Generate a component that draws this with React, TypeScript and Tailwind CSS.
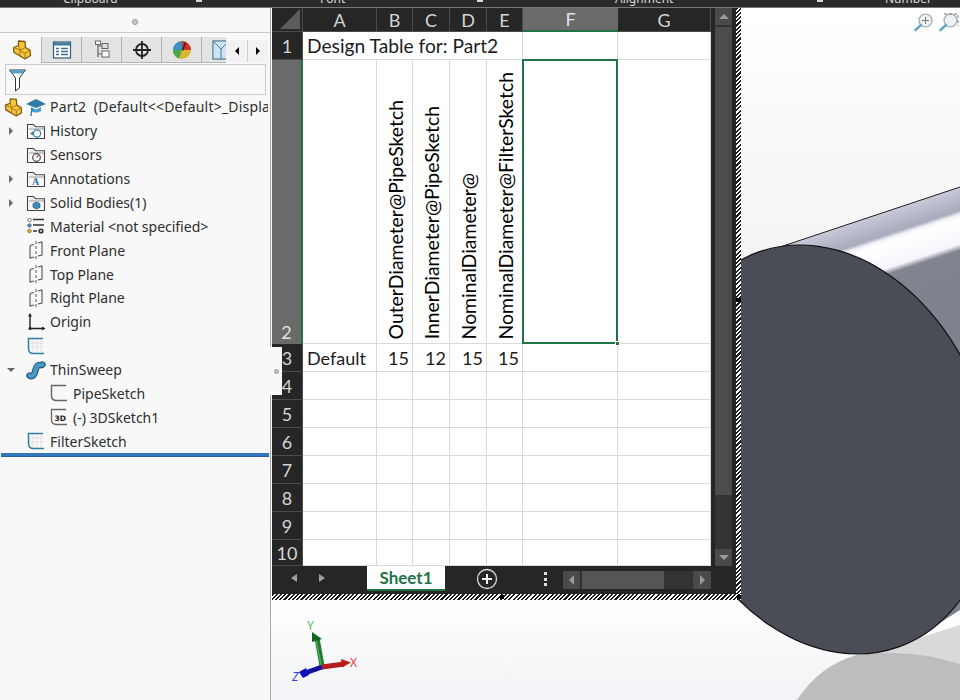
import React from 'react'

const ui = { fontFamily: '"Noto Sans", "Open Sans", sans-serif' }
const xl = { fontFamily: 'Lato, "Noto Sans", sans-serif' }

const hatch = 'bg-[repeating-linear-gradient(135deg,#1c1c1c_0px,#1c1c1c_1.5px,#ffffff_1.5px,#ffffff_3px)]'

function PartIcon({ size = 20 }: { size?: number }) {
  return (
    <svg width={size} height={size} viewBox="0 0 20 20" className="shrink-0">
      <path d="M6.5 1L13 1.5 13.5 7.5 18 10 18.5 15.5 13 19 8 16 2 12.5 1.5 7.5 6.5 5.5Z" fill="#f4c63f" stroke="#7d5a0c" strokeWidth="1.3" strokeLinejoin="round" />
      <path d="M6.5 5.5L8 10 13.5 7.5M1.5 7.5L8 10 8 16M8 10.5L13 13.5 18 10M13 13.5V19" fill="none" stroke="#a67c17" strokeWidth="1" />
    </svg>
  )
}

function Folder({ children }: { children?: React.ReactNode }) {
  return (
    <svg width="20" height="20" viewBox="0 0 20 20">
      <path d="M1.5 17.5V3.5h6l2 2.2h9v11.8z" fill="#f7f7f7" stroke="#444" strokeWidth="1.1" />
      <path d="M3 8h15" stroke="#9a9a9a" strokeWidth="1" />
      {children}
    </svg>
  )
}

function PlaneIcon() {
  return (
    <svg width="20" height="20" viewBox="0 0 20 20">
      <path d="M4 5.5l4-1M12 3l4-1v13l-4 1M8 17l-4 1V5.5" fill="none" stroke="#555" strokeWidth="1.1" />
      <path d="M10 1v18" stroke="#555" strokeWidth="1" strokeDasharray="3 2" />
    </svg>
  )
}

function SketchIcon({ grid = true, color = '#2f7f9f' }: { grid?: boolean; color?: string }) {
  return (
    <svg width="20" height="20" viewBox="0 0 20 20">
      {grid && <path d="M7 3v14M11 3v14M15 3v14M3 7h15M3 11h15" stroke="#dcdcdc" strokeWidth="0.8" />}
      <path d="M17 2.5H2.5V12.5q0 5 5 5H18" fill="none" stroke={color} strokeWidth="1.5" />
    </svg>
  )
}

type TreeRow = { label: string; indent: 0 | 1; arrow?: 'right' | 'down'; icon: React.ReactNode }

const rows: TreeRow[] = [
  { label: 'History', indent: 0, arrow: 'right', icon: <Folder><circle cx="11" cy="12.5" r="3.6" fill="#fff" stroke="#3d7da0" strokeWidth="1.2" /><path d="M4 12.5l3-2v4z" fill="#3d7da0" /></Folder> },
  { label: 'Sensors', indent: 0, icon: <Folder><circle cx="10.5" cy="12.5" r="3.8" fill="#fff" stroke="#444" strokeWidth="1.2" /><path d="M10.5 12.5l2-2.5" stroke="#c0392b" strokeWidth="1.2" /></Folder> },
  { label: 'Annotations', indent: 0, arrow: 'right', icon: <Folder><text x="6" y="16" fontSize="10" fontWeight="700" fontFamily="Liberation Serif" fill="#2f6f9f">A</text></Folder> },
  { label: 'Solid Bodies(1)', indent: 0, arrow: 'right', icon: <Folder><path d="M10.5 9l3.5 1.7v3.6l-3.5 1.7-3.5-1.7v-3.6z" fill="#3d8ab5" stroke="#1f5a7c" strokeWidth="0.7" /></Folder> },
  {
    label: 'Material <not specified>', indent: 0, icon: (
      <svg width="20" height="20" viewBox="0 0 20 20">
        <circle cx="3.5" cy="4" r="1.7" fill="#fff" stroke="#777" />
        <circle cx="3.5" cy="9.5" r="1.7" fill="#5a9bc4" stroke="#3b6f90" />
        <circle cx="3.5" cy="15" r="1.7" fill="#e8b93a" stroke="#94741c" />
        <path d="M7 3.5h11M7 9h11M7 15h4" stroke="#333" strokeWidth="1.6" />
        <circle cx="15" cy="15" r="2.6" fill="#333" /><circle cx="15" cy="15" r="0.9" fill="#fff" />
      </svg>
    ),
  },
  { label: 'Front Plane', indent: 0, icon: <PlaneIcon /> },
  { label: 'Top Plane', indent: 0, icon: <PlaneIcon /> },
  { label: 'Right Plane', indent: 0, icon: <PlaneIcon /> },
  {
    label: 'Origin', indent: 0, icon: (
      <svg width="20" height="20" viewBox="0 0 20 20">
        <path d="M4 3v13.5h14" fill="none" stroke="#222" strokeWidth="1.4" />
        <path d="M4 1l-2 3.5h4zM19.5 16.5L16 14.5v4z" fill="#222" />
        <circle cx="4" cy="16.5" r="1.5" fill="#222" />
      </svg>
    ),
  },
  { label: '', indent: 0, icon: <SketchIcon /> },
  {
    label: 'ThinSweep', indent: 0, arrow: 'down', icon: (
      <svg width="20" height="20" viewBox="0 0 20 20">
        <path d="M3.5 15.5q3 2 5-2l1.5-5q1-3 3-3.5 2 .5 3.5-.5" fill="none" stroke="#1f4f6e" strokeWidth="6.4" strokeLinecap="round" />
        <path d="M3.5 15.5q3 2 5-2l1.5-5q1-3 3-3.5 2 .5 3.5-.5" fill="none" stroke="#4a9ac7" strokeWidth="4.4" strokeLinecap="round" />
      </svg>
    ),
  },
  { label: 'PipeSketch', indent: 1, icon: <SketchIcon grid={false} color="#666" /> },
  {
    label: '(-) 3DSketch1', indent: 1, icon: (
      <svg width="20" height="20" viewBox="0 0 20 20">
        <path d="M17 2.5H2.5V12.5q0 5 5 5H18" fill="none" stroke="#666" strokeWidth="1.3" />
        <text x="5.5" y="14" fontSize="7.5" fontWeight="700" fontFamily="DejaVu Sans" fill="#222">3D</text>
      </svg>
    ),
  },
  { label: 'FilterSketch', indent: 0, icon: <SketchIcon /> },
]

function Tabs() {
  const cls = 'w-10 h-[26px] flex items-center justify-center bg-[#e3e3e3] border-r border-b border-[#b4b4b4]'
  return (
    <div className="mt-1 h-[26px] flex pl-[2px] relative">
      <div className="w-[40px] h-[26px] flex items-center justify-center bg-[#f8f8f8] border-r border-[#b4b4b4]">
        <PartIcon />
      </div>
      <div className={cls}>
        <svg width="20" height="20" viewBox="0 0 20 20">
          <rect x="1.5" y="2" width="17" height="16" fill="#fff" stroke="#2f5d78" strokeWidth="1.2" />
          <rect x="2" y="2.5" width="16" height="3" fill="#3f7f9c" />
          <path d="M4 8.5h3M9 8.5h7M4 11.5h3M9 11.5h7M4 14.5h3M9 14.5h7" stroke="#40708c" strokeWidth="1.4" />
        </svg>
      </div>
      <div className={cls}>
        <svg width="20" height="20" viewBox="0 0 20 20">
          <path d="M6 2v15M6 6h4M6 14h4" fill="none" stroke="#666" strokeWidth="1.2" />
          <rect x="3.5" y="1" width="5" height="3.5" fill="#fff" stroke="#666" />
          <rect x="10" y="3.5" width="6" height="5" fill="#ddd" stroke="#666" />
          <rect x="10" y="11" width="7" height="6" fill="#fff" stroke="#666" />
        </svg>
      </div>
      <div className={cls}>
        <svg width="20" height="20" viewBox="0 0 20 20">
          <circle cx="10" cy="10" r="6" fill="none" stroke="#222" strokeWidth="1.8" />
          <path d="M10 1v18M1 10h18" stroke="#222" strokeWidth="1.8" />
        </svg>
      </div>
      <div className={cls}>
        <svg width="20" height="20" viewBox="0 0 20 20">
          <circle cx="10" cy="10" r="9" fill="#d9b531" />
          <path d="M10 10L1 10A9 9 0 0 1 10 1z" fill="#3e8fc7" />
          <path d="M10 10V1A9 9 0 0 1 19 10z" fill="#c8352e" />
          <path d="M10 10H1A9 9 0 0 0 7 18.5z" fill="#4ea646" />
          <path d="M10 10l3-8 1 1-3 8z" fill="#222" />
        </svg>
      </div>
      <div className="w-[24px] h-[26px] flex items-center pl-[10px] bg-[#e3e3e3] border-b border-[#b4b4b4] overflow-hidden">
        <svg width="18" height="20" viewBox="0 0 18 20" className="shrink-0">
          <rect width="18" height="20" fill="#bdbdbd" />
          <path d="M1 1h16v18H1z" fill="#cfe2ee" stroke="#3f7f9c" />
          <path d="M1 1l8 8 8-8M9 9v10" fill="none" stroke="#3f7f9c" />
        </svg>
      </div>
      <div className="w-[42px] h-[22px] mt-[3px] flex items-center bg-[#f2f2f2]">
        <div className="w-[22px] h-[22px] flex items-center justify-center border-r border-[#cfcfcf]">
          <div className="w-0 h-0 border-y-[4px] border-y-transparent border-r-[4px] border-r-black" />
        </div>
        <div className="w-[20px] h-[22px] flex items-center justify-center">
          <div className="w-0 h-0 border-y-[4px] border-y-transparent border-l-[4px] border-l-black" />
        </div>
      </div>
    </div>
  )
}

function Sidebar() {
  return (
    <aside style={ui} className="w-[271px] shrink-0 h-full bg-[#f8f8f8] border-r border-[#a8a8a8] flex flex-col text-[14px] text-[#2e2e2e]">
      <div className="h-[25px] flex items-center justify-center border-b border-[#c8c8c8] shrink-0">
        <div className="w-[6px] h-[6px] rounded-full bg-[#c9c9c9] border border-[#9a9a9a] mt-[3px]" />
      </div>
      <Tabs />
      <div className="mx-[5px] mt-px h-[31px] w-[261px] bg-[#f8f8f8] border border-[#cccccc] flex items-center pl-[2px] shrink-0">
        <svg width="20" height="26" viewBox="0 0 20 26">
          <path d="M1.5 3h16l-6 8v10l-4 3V11z" fill="#fff" stroke="#333" strokeWidth="1" />
          <path d="M2 3h15l-2.5 3.5h-10z" fill="#5aa0cc" />
        </svg>
      </div>
      <div className="flex flex-col">
        <div className="h-[24px] flex items-center pl-[4px] whitespace-nowrap overflow-hidden w-[268px]">
          <PartIcon size={19} />
          <svg width="22" height="20" viewBox="0 0 22 20" className="ml-[2px] shrink-0">
            <path d="M1 7L11 2l10 5-10 4z" fill="#2f7ca6" />
            <path d="M6 10v4q5 3 10 0v-4l-5 2.5z" fill="#46a0cc" />
            <path d="M6 19l1-8" stroke="#2f7ca6" strokeWidth="1.4" />
          </svg>
          <span className="ml-[3px] -mt-px tracking-[0.2px]">Part2&nbsp; (Default&lt;&lt;Default&gt;_Display State 1&gt;)</span>
        </div>
        {rows.map((r, i) => (
          <div key={i} className={r.indent ? 'h-[23.86px] flex items-center pl-[49px]' : 'h-[23.86px] flex items-center pl-[7px]'}>
            {!r.indent && (
              <span className="w-[19px] flex items-center">
                {r.arrow === 'right' && <span className="ml-[2px] w-0 h-0 border-y-[4px] border-y-transparent border-l-[4px] border-l-[#666]" />}
                {r.arrow === 'down' && <span className="w-0 h-0 border-x-[4px] border-x-transparent border-t-[4px] border-t-[#666]" />}
              </span>
            )}
            <span className="w-[20px] h-[20px] shrink-0">{r.icon}</span>
            <span className="ml-[4px]">{r.label}</span>
          </div>
        ))}
      </div>
      <div className="ml-px w-[268px] h-[4px] bg-[#2f78bd] border-b border-[#2b5f94]" />
    </aside>
  )
}

const cols = ['A', 'B', 'C', 'D', 'E', 'F', 'G']
const headers = ['OuterDiameter@PipeSketch', 'InnerDiameter@PipeSketch', 'NominalDiameter@', 'NominalDiameter@FilterSketch']
const values = ['15', '12', '15', '15']
const cell = 'border-r border-b border-[#dadada] bg-white'
const rowHead = 'bg-[#262626] border-r border-b border-[#4a4a4a] flex items-center justify-center text-[#d4d4d4] text-[18px]'

function Sheet() {
  return (
    <div
      style={xl}
      className="grid grid-cols-[31px_74px_36px_37px_37px_36px_95px_93px] grid-rows-[24px_28px_284px_28px_28px_28px_28px_28px_28px_28px_26px] text-[18px] text-[#1c1c1c] leading-none"
    >
      <div className="bg-[#262626] border-r border-b border-[#4a4a4a] flex items-end justify-end p-[2px]">
        <div className="w-0 h-0 border-l-[20px] border-l-transparent border-b-[20px] border-b-[#5c5c5c]" />
      </div>
      {cols.map(c => (
        <div
          key={c}
          className={c === 'F'
            ? 'bg-[#6a6a6a] border-b-2 border-[#217346] flex items-center justify-center text-[#e2e2e2]'
            : 'bg-[#262626] border-r border-b border-[#4a4a4a] flex items-center justify-center text-[#d4d4d4]'}
        >
          {c}
        </div>
      ))}

      <div className={rowHead}>1</div>
      <div className="col-span-5 bg-white border-b border-[#dadada] border-r flex items-center pl-[4px] whitespace-nowrap text-[19.2px]">Design Table for: Part2</div>
      <div className={cell} />
      <div className={cell} />

      <div className="bg-[#6a6a6a] border-r-2 border-[#217346] flex items-end justify-center pb-[3px] text-[#e2e2e2]">2</div>
      <div className={cell} />
      {headers.map(h => (
        <div key={h} className={cell + ' flex items-end justify-center pb-[4px] pl-[2px] text-[19.4px] text-black'}>
          <span className="[writing-mode:vertical-rl] rotate-180 whitespace-nowrap">{h}</span>
        </div>
      ))}
      <div className="relative bg-white">
        <div className="absolute -left-px -top-px right-0 bottom-0 border-2 border-[#217346]" />
        <div className="absolute right-[-2px] bottom-[-2px] w-[5px] h-[5px] bg-[#217346] border border-white" />
      </div>
      <div className={cell} />

      <div className={rowHead}>3</div>
      <div className={cell + ' flex items-center pl-[4px]'}>Default</div>
      {values.map((v, i) => (
        <div key={i} className={cell + ' flex items-center justify-end pr-[3px]'}>{v}</div>
      ))}
      <div className={cell} />
      <div className={cell} />

      {[4, 5, 6, 7, 8, 9, 10].map(n => (
        <React.Fragment key={n}>
          <div className={rowHead}>{n}</div>
          {cols.map(c => <div key={c} className={cell} />)}
        </React.Fragment>
      ))}
    </div>
  )
}

function SheetTabs() {
  return (
    <div style={xl} className="h-[26px] bg-[#262626] flex items-start shrink-0">
      <div className="w-[95px] h-[24px] flex items-center gap-[22px] pl-[19px]">
        <div className="w-0 h-0 border-y-[4px] border-y-transparent border-r-[6px] border-r-[#a0a0a0]" />
        <div className="w-0 h-0 border-y-[4px] border-y-transparent border-l-[6px] border-l-[#a0a0a0]" />
      </div>
      <div className="w-[78px] h-[25px] bg-white border-b-2 border-[#217346] flex items-center justify-center text-[17px] font-bold text-[#217346]">Sheet1</div>
      <div className="w-[86px] h-[26px] flex items-center pl-[31px]">
        <svg width="22" height="22" viewBox="0 0 22 22">
          <circle cx="11" cy="11" r="9.5" fill="none" stroke="#d8d8d8" strokeWidth="1.3" />
          <path d="M11 6v10M6 11h10" stroke="#f0f0f0" strokeWidth="2" />
        </svg>
      </div>
      <div className="w-[32px] h-[26px] flex flex-col items-center justify-center gap-[2.5px] pr-[17px] pl-[13px]">
        <div className="w-[3px] h-[3px] bg-[#e0e0e0]" />
        <div className="w-[3px] h-[3px] bg-[#e0e0e0]" />
        <div className="w-[3px] h-[3px] bg-[#e0e0e0]" />
      </div>
      <div className="mt-[5px] w-[148px] h-[18px] bg-[#333333] flex items-stretch">
        <div className="w-[17px] bg-[#4a4a4a] flex items-center justify-center">
          <div className="w-0 h-0 border-y-[5px] border-y-transparent border-r-[5px] border-r-[#9a9a9a]" />
        </div>
        <div className="ml-[2px] w-[82px] bg-[#555555]" />
        <div className="ml-auto w-[18px] bg-[#4a4a4a] flex items-center justify-center">
          <div className="w-0 h-0 border-y-[5px] border-y-transparent border-l-[5px] border-l-[#9a9a9a]" />
        </div>
      </div>
    </div>
  )
}

function VScroll() {
  return (
    <div className="w-[25px] h-[558px] bg-[#262626] flex flex-col pl-[4px] pr-[4px]">
      <div className="h-[17px] bg-[#4a4a4a] flex items-center justify-center">
        <div className="w-0 h-0 border-x-[5px] border-x-transparent border-b-[5px] border-b-[#9a9a9a]" />
      </div>
      <div className="flex-1 bg-[#333333] flex flex-col pt-[2px]">
        <div className="h-[468px] bg-[#4c4c4c]" />
      </div>
      <div className="h-[17px] bg-[#4a4a4a] flex items-center justify-center">
        <div className="w-0 h-0 border-x-[5px] border-x-transparent border-t-[5px] border-t-[#9a9a9a]" />
      </div>
    </div>
  )
}

function Model() {
  return (
    <svg className="absolute inset-0" width="689" height="692" viewBox="271 8 689 692">
      <defs>
        <linearGradient id="bg" x1="0" y1="0" x2="0" y2="1">
          <stop offset="0" stopColor="#ffffff" />
          <stop offset="0.35" stopColor="#f4f4f5" />
          <stop offset="0.85" stopColor="#ffffff" />
          <stop offset="1" stopColor="#f2f3f6" />
        </linearGradient>
        <linearGradient id="tube" gradientUnits="userSpaceOnUse" x1="960" y1="187" x2="991.6" y2="281.9">
          <stop offset="0" stopColor="#c8cad8" />
          <stop offset="0.22" stopColor="#a8abbc" />
          <stop offset="0.26" stopColor="#f2f2f8" />
          <stop offset="0.3" stopColor="#ffffff" />
          <stop offset="0.54" stopColor="#f6f6fc" />
          <stop offset="0.6" stopColor="#82848f" />
          <stop offset="1" stopColor="#7f818f" />
        </linearGradient>
      </defs>
      <rect x="271" y="8" width="689" height="692" fill="url(#bg)" />
      <path d="M857 654L913 640 960 625V664Q910 648 857 655Z" fill="#d9d9db" />
      <path d="M797 700Q820 665 857 655Q910 648 960 664V700Z" fill="#bdbdc0" />
      <path d="M777 248L960 187V610L913 640Z" fill="url(#tube)" />
      <path d="M777 248L960 187" stroke="#222" strokeWidth="1" />
      <ellipse cx="828.5" cy="449.5" rx="209.5" ry="159.4" transform="rotate(70.4 828.5 449.5)" fill="#4a4c56" stroke="#111" strokeWidth="1.2" />

      <g transform="translate(924 22)">
        <circle cx="1.5" cy="-1.5" r="6.5" fill="#eef2f4" stroke="#9aa" strokeWidth="1.2" />
        <path d="M1.5-5v7M-2-1.5h7" stroke="#777" strokeWidth="1" />
        <path d="M-3 3l-5.5 5" stroke="#6aa5c8" strokeWidth="2.6" strokeLinecap="round" />
      </g>
      <g transform="translate(949 22)">
        <circle cx="1.5" cy="-1.5" r="6.5" fill="#eef2f4" stroke="#9aa" strokeWidth="1.2" />
        <path d="M-5-8h14v12" fill="none" stroke="#777" strokeWidth="1" strokeDasharray="3 2" />
        <path d="M-3 3l-5.5 5" stroke="#6aa5c8" strokeWidth="2.6" strokeLinecap="round" />
      </g>

      <path d="M322 666l-5-28" stroke="#1e7a2e" strokeWidth="5" />
      <path d="M321 665l-5-26" stroke="#4caf50" strokeWidth="1.4" />
      <path d="M312 632l10 7-10 3z" fill="#11661f" />
      <path d="M322 667l22-3" stroke="#b31f1f" strokeWidth="5" />
      <path d="M341 659l10 3.5-9 5z" fill="#c01818" />
      <path d="M322 667l-17 6" stroke="#12129c" strokeWidth="5" />
      <path d="M299 672l7-4 3 7-6 3z" fill="#1010c0" />
      <text x="307" y="630" fontSize="12" fill="#5cb868" fontFamily="Noto Sans">Y</text>
      <text x="350" y="667" fontSize="12" fill="#e83a3a" fontFamily="Noto Sans">X</text>
      <text x="292" y="681" fontSize="12" fontStyle="italic" fill="#3a3ae0" fontFamily="Noto Sans">Z</text>
    </svg>
  )
}

function TopBar() {
  const label = 'shrink-0 text-[12px] leading-[14px] -mt-[8px] text-[#d8d8d8]'
  const mark = 'shrink-0 w-[6px] h-[2px] bg-[#d8d8d8]'
  return (
    <div style={ui} className="h-2 bg-[#2b2b2b] border-b border-[#777] overflow-hidden flex shrink-0 items-start pl-[63px]">
      <span className={label + ' w-[133px]'}>Clipboard</span>
      <span className={mark + ' mr-[118px]'} />
      <span className={label + ' w-[157px]'}>Font</span>
      <span className={mark + ' mr-[132px]'} />
      <span className={label + ' w-[202px]'}>Alignment</span>
      <span className={mark + ' mr-[62px]'} />
      <span className={label}>Number</span>
    </div>
  )
}

export default function App() {
  return (
    <div className="w-[960px] h-[700px] overflow-hidden flex flex-col bg-white">
      <TopBar />
      <div className="flex-1 flex min-h-0">
        <Sidebar />
        <main className="relative flex-1">
          <Model />
          <div className="absolute left-px top-0 w-[469px] h-[592px] flex flex-col">
            <div className="flex flex-1 min-h-0">
              <div className="w-[464px] flex flex-col">
                <div className="flex">
                  <Sheet />
                  <VScroll />
                </div>
                <SheetTabs />
                <div className="h-[2px] bg-[#262626]" />
              </div>
              <div className={'w-[5px] relative ' + hatch}>
                <div className="absolute left-0 top-[290px] w-[5px] h-[4px] bg-black" />
              </div>
            </div>
            <div className={'h-[6px] relative ' + hatch}>
              <div className="absolute left-[228px] top-[1px] w-[4px] h-[4px] bg-black" />
              <div className="absolute right-0 top-px w-[4px] h-[4px] bg-black" />
            </div>
          </div>
          {/* pull-out handle for the feature tree */}
          <div className="absolute -left-px top-[339px] w-[12px] h-[48px] bg-[#f8f8f8] flex items-center justify-center">
            <div className="w-[5px] h-[5px] rounded-full bg-[#c4c4c4] border border-[#999]" />
          </div>
        </main>
      </div>
    </div>
  )
}
